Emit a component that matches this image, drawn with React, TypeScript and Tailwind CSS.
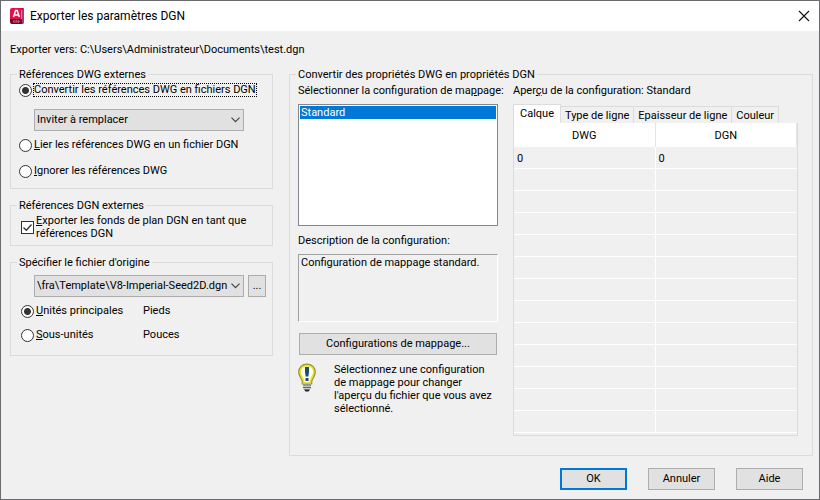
import type { ReactNode } from 'react'

const tabs = ['Type de ligne', 'Epaisseur de ligne', 'Couleur']

const rows = [
  ['0', '0'],
  ...Array.from({ length: 12 }, () => ['', '']),
]

const buttonBase =
  'h-[22px] border bg-[#e1e1e1] text-center leading-5 hover:bg-[#e5f1fb]'

function AppIcon() {
  return (
    <svg width="16" height="16" viewBox="0 0 16 16" aria-hidden="true">
      <path d="M3 0h11a1.200 1.200 0 0 1 1 1v14l-2 1V2z" fill="#a80f3c" />
      <path d="M1 2A2 2 0 0 1 3 0h9.500v11H1z" fill="#e3104f" />
      <path d="M1 11h12.500v5H3a2 2 0 0 1-2-2z" fill="#6f0423" />
      <path d="M13 .5l2 1.300V15l-2 1z" fill="#b3386a" />
      <path
        d="M4.500 9L6.600 2.600h1.600L10.300 9M5.400 7h4"
        fill="none"
        stroke="#fff"
        strokeWidth="1.500"
      />
      <path
        d="M5.800 12.700H4.600v1.600h1.200M6.800 14.600v-1.800h1.200v1.800M9.200 12.700h.8l.5.5v.6l-.5.5h-.8z"
        fill="none"
        stroke="#d59aac"
        strokeWidth="0.700"
      />
    </svg>
  )
}

function BulbIcon() {
  return (
    <svg width="20" height="30" viewBox="0 0 20 30" aria-hidden="true" className="shrink-0">
      <path
        d="M9 1.500c4.800 0 8 3.200 8 7.500 0 4-2.600 5.500-3.600 9.500v2H4.600v-2C3.600 14.500 1 13 1 9c0-4.300 3.200-7.500 8-7.500z"
        fill="#fdfde8"
        stroke="#96962c"
        strokeWidth="1.800"
      />
      <path
        d="M9 2.600c4 0 6.900 2.600 6.900 6.400 0 3.700-2.500 5.200-3.500 9.200v1.500H5.600v-1.500C4.600 14.200 2.100 12.700 2.100 9c0-3.800 2.900-6.400 6.900-6.400z"
        fill="none"
        stroke="#e6e03a"
        strokeWidth="1.600"
      />
      <path d="M7 4h4v5l-.7 4.500H7.700L7 9z" fill="#1c4a72" />
      <path d="M7.500 15h3v3h-3z" fill="#1c4a72" />
      <path d="M5 20.500h8v5l-2 2H7l-2-2z" fill="#c8c8c8" />
      <path d="M5 22h8M5 24.500h8" stroke="#666" strokeWidth="1" />
      <path d="M6 26.500h6l-1.500 2h-3z" fill="#222" />
    </svg>
  )
}

function Group({
  title,
  className,
  children,
}: {
  title: string
  className: string
  children: ReactNode
}) {
  return (
    <fieldset className={`min-w-0 border border-[#dcdcdc] ${className}`}>
      <legend className="-ml-0.5 px-0.5 pt-0.5 leading-[14px]">{title}</legend>
      {children}
    </fieldset>
  )
}

function Radio({
  name,
  checked,
  focused,
  children,
}: {
  name: string
  checked?: boolean
  focused?: boolean
  children: ReactNode
}) {
  return (
    <label className="flex h-4 items-center gap-0.5">
      <input
        type="radio"
        name={name}
        defaultChecked={checked}
        className="size-[13px] shrink-0 appearance-none rounded-full border border-[#333] bg-white checked:bg-[radial-gradient(circle,#333_3px,#fff_4px)]"
      />
      <span
        className={
          focused
            ? 'whitespace-nowrap leading-3 outline-1 outline-dotted outline-black'
            : 'whitespace-nowrap'
        }
      >
        {children}
      </span>
    </label>
  )
}

function Select({ label, value, className }: { label: string; value: string; className?: string }) {
  return (
    <div className={`relative ${className ?? ''}`}>
      <select
        aria-label={label}
        className="block h-[22px] w-full appearance-none border border-[#adadad] bg-[#e1e1e1] pr-3.5 pl-0.5 leading-5"
      >
        <option>{value}</option>
      </select>
      <svg
        width="9"
        height="6"
        viewBox="0 0 9 6"
        aria-hidden="true"
        className="pointer-events-none absolute top-2 right-1"
      >
        <path d="M0.500 0.700l4 4 4-4" fill="none" stroke="#444" strokeWidth="1.200" />
      </svg>
    </div>
  )
}

function MappingTable() {
  return (
    <div className="flex min-w-0 flex-1 flex-col">
      <div className="pt-px">
        Aper<u>ç</u>u de la configuration: Standard
      </div>
      <div role="tablist" className="mt-[5px] flex items-end">
        <button
          role="tab"
          aria-selected="true"
          className="h-[19px] border border-b-0 border-[#dcdcdc] bg-white px-1.5 leading-[18px]"
        >
          Calque
        </button>
        {tabs.map((tab) => (
          <button
            key={tab}
            role="tab"
            aria-selected="false"
            className="h-[17px] border border-b-0 border-l-0 border-[#dcdcdc] px-1 leading-[18px] whitespace-nowrap"
          >
            {tab}
          </button>
        ))}
      </div>
      <div className="border border-t-0 border-[#dcdcdc] pb-0.5">
        <table className="w-full table-fixed border-separate border-spacing-0">
          <thead>
            <tr className="h-6 bg-white">
              <th className="border-r border-[#e5e5e5] p-0 pt-0.5 font-normal">DWG</th>
              <th className="border-r border-[#e5e5e5] p-0 pt-0.5 font-normal">DGN</th>
            </tr>
          </thead>
          <tbody>
            {rows.map(([dwg, dgn], i) => (
              <tr key={i} className="h-[22px]">
                <td className="border-r border-b border-white p-0 pt-[3px] pl-[3px]">{dwg}</td>
                <td className="border-b border-white p-0 pt-[3px] pl-[3px]">{dgn}</td>
              </tr>
            ))}
          </tbody>
        </table>
      </div>
    </div>
  )
}

export default function App() {
  return (
    <div className="flex min-h-screen flex-col border border-[#6b6b6e] bg-[#f0f0f0] font-[Roboto,sans-serif] text-[11px] leading-4 text-black">
      {/* Title bar */}
      <header className="flex h-[30px] items-center gap-[5px] bg-white pr-[9px] pl-2">
        <AppIcon />
        <h1 className="flex-1 text-[12px]">Exporter les paramètres DGN</h1>
        <button aria-label="Fermer">
          <svg width="12" height="12" viewBox="0 0 12 12" aria-hidden="true">
            <path d="M1 1l10 10M11 1L1 11" stroke="#111" strokeWidth="1.100" />
          </svg>
        </button>
      </header>

      <main className="flex flex-1 flex-col pt-[11px] pr-1.5 pl-2">
        <p className="pl-px">Exporter vers: C:\Users\Administrateur\Documents\test.dgn</p>

        <div className="mt-2 flex gap-4 pl-px">
          {/* Source options */}
          <div className="flex w-[263px] shrink-0 flex-col gap-2">
            <Group title="Références DWG externes" className="px-2 pb-[9px]">
              <Radio name="dwg" checked focused>
                Convertir les références DWG en fichiers DGN
              </Radio>
              <Select
                label="Convertir les références DWG"
                value="Inviter à remplacer"
                className="mt-[11px] mr-5 ml-[15px]"
              />
              <div className="mt-1.5 flex flex-col gap-2.5">
                <Radio name="dwg">
                  <u>L</u>ier les références DWG en un fichier DGN
                </Radio>
                <Radio name="dwg">
                  <u>I</u>gnorer les références DWG
                </Radio>
              </div>
            </Group>

            <Group title="Références DGN externes" className="px-2 pb-[5px]">
              <label className="flex items-center gap-0.5 pt-px pl-0.5 leading-[13px]">
                <input
                  type="checkbox"
                  defaultChecked
                  className="size-[13px] shrink-0 appearance-none border border-[#333] bg-white bg-[url('data:image/svg+xml,%3Csvg%20xmlns=%22http://www.w3.org/2000/svg%22%20viewBox=%220%200%2011%2011%22%3E%3Cpath%20d=%22M1.5%205.500l2.800%202.800%205.200-5.800%22%20fill=%22none%22%20stroke=%22%23333%22%20stroke-width=%221.300%22/%3E%3C/svg%3E')]"
                />
                <span>
                  <u>E</u>xporter les fonds de plan DGN en tant que références DGN
                </span>
              </label>
            </Group>

            <Group title="Spécifier le fichier d'origine" className="pr-1.5 pb-3 pl-2">
              <div className="mt-[5px] flex items-center gap-1 pl-[15px]">
                <Select
                  label="Fichier d'origine"
                  value="\fra\Template\V8-Imperial-Seed2D.dgn"
                  className="min-w-0 flex-1"
                />
                <button aria-label="Parcourir" className={`${buttonBase} w-[18px] border-[#adadad]`}>
                  ...
                </button>
              </div>
              <div className="mt-1.5 grid grid-cols-[122px_1fr] gap-y-2 pl-0.5">
                <Radio name="units" checked>
                  <u>U</u>nités principales
                </Radio>
                <span>Pieds</span>
                <Radio name="units">
                  <u>S</u>ous-unités
                </Radio>
                <span>Pouces</span>
              </div>
            </Group>
          </div>

          {/* Mapping setup */}
          <Group
            title="Convertir des propriétés DWG en propriétés DGN"
            className="flex-1 pr-3.5 pb-[19px] pl-2"
          >
            <div className="flex gap-[15px]">
              <div className="flex w-[200px] shrink-0 flex-col">
                <label htmlFor="setup" className="pt-px whitespace-nowrap">
                  Sélectionner la configuration de ma<u>p</u>page:
                </label>
                <select
                  id="setup"
                  size={2}
                  defaultValue="Standard"
                  className="mt-[5px] h-[122px] overflow-hidden border border-[#828790] bg-white p-px"
                >
                  <option className="h-[13px] min-h-0 p-0 pl-px leading-[13px] text-white checked:bg-[linear-gradient(#0078d7,#0078d7)] [-webkit-text-fill-color:#fff]">
                    Standard
                  </option>
                </select>
                <label htmlFor="description" className="mt-1.5 pt-px">
                  Description de la configuration:
                </label>
                <textarea
                  id="description"
                  readOnly
                  value="Configuration de mappage standard."
                  className="mt-[5px] block h-[68px] resize-none border border-t-[#a0a0a0] border-r-white border-b-white border-l-[#a0a0a0] bg-transparent pl-0.5"
                />
                <button className={`${buttonBase} mx-px mt-[11px] border-[#adadad]`}>
                  Confi<u>g</u>urations de mappage...
                </button>
                <div className="mt-2 flex gap-4 leading-[13px]">
                  <BulbIcon />
                  <p>
                    Sélectionnez une configuration de mappage pour changer l'aperçu du fichier que
                    vous avez sélectionné.
                  </p>
                </div>
              </div>
              <MappingTable />
            </div>
          </Group>
        </div>

        <footer className="mt-3 flex justify-end gap-[21px] pr-2.5">
          <button className="h-[22px] w-[67px] border-2 border-[#0078d7] bg-[#e1e1e1] leading-[18px]">
            OK
          </button>
          <button className={`${buttonBase} w-[67px] border-[#adadad]`}>Annuler</button>
          <button className={`${buttonBase} w-[67px] border-[#adadad]`}>Aide</button>
        </footer>
      </main>
    </div>
  )
}
